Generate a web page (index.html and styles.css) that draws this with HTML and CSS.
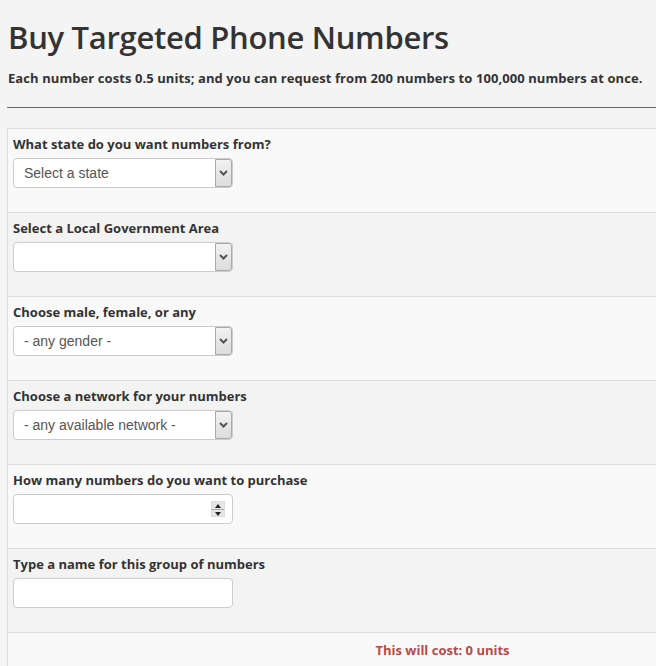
FILE: index.html
```html
<!DOCTYPE html>
<html>
<head>
<meta charset="utf-8">
<link rel="stylesheet" href="styles.css">
</head>
<body>
<div class="page">
  <h1 class="title">Buy Targeted Phone Numbers</h1>
  <p class="lead">Each number costs 0.5 units; and you can request from 200 numbers to 100,000 numbers at once.</p>
  <hr class="rule">
  <div class="form">
    <div class="row odd">
      <label class="label">What state do you want numbers from?</label>
      <div class="select"><span class="select-text">Select a state</span><span class="arrow"><svg width="9" height="6" viewBox="0 0 9 6"><path d="M1 1 L4.5 4.5 L8 1" fill="none" stroke="#555" stroke-width="2"/></svg></span></div>
    </div>
    <div class="row even">
      <label class="label">Select a Local Government Area</label>
      <div class="select"><span class="select-text"></span><span class="arrow"><svg width="9" height="6" viewBox="0 0 9 6"><path d="M1 1 L4.5 4.5 L8 1" fill="none" stroke="#555" stroke-width="2"/></svg></span></div>
    </div>
    <div class="row odd">
      <label class="label">Choose male, female, or any</label>
      <div class="select"><span class="select-text">- any gender -</span><span class="arrow"><svg width="9" height="6" viewBox="0 0 9 6"><path d="M1 1 L4.5 4.5 L8 1" fill="none" stroke="#555" stroke-width="2"/></svg></span></div>
    </div>
    <div class="row even">
      <label class="label">Choose a network for your numbers</label>
      <div class="select"><span class="select-text">- any available network -</span><span class="arrow"><svg width="9" height="6" viewBox="0 0 9 6"><path d="M1 1 L4.5 4.5 L8 1" fill="none" stroke="#555" stroke-width="2"/></svg></span></div>
    </div>
    <div class="row odd">
      <label class="label">How many numbers do you want to purchase</label>
      <div class="input"><span class="spinner"><span class="spin-up"></span><span class="spin-down"></span></span></div>
    </div>
    <div class="row even">
      <label class="label">Type a name for this group of numbers</label>
      <div class="input"></div>
    </div>
    <div class="row odd cost-row">
      <span class="cost">This will cost: 0 units</span>
    </div>
  </div>
</div>
</body>
</html>
```
FILE: styles.css
```css
html, body { margin: 0; padding: 0; overflow: hidden; }
body {
  background: #f4f4f4;
  font-family: "Open Sans", "DejaVu Sans", sans-serif;
  color: #333;
  width: 656px;
  height: 666px;
}
.page {
  width: 870px;
  padding-left: 7px;
}
.title {
  margin: 0;
  padding: 17px 0 0 1px;
  font-size: 31px;
  font-weight: 600;
  line-height: 40px;
  letter-spacing: -0.3px;
}
.lead {
  margin: 12px 0 0 1px;
  font-size: 13px;
  font-weight: 700;
  line-height: 18px;
  letter-spacing: 0.08px;
}
.rule {
  margin: 20px 0 0 0;
  border: 0;
  border-top: 1px solid #666;
  height: 0;
}
.form {
  margin-top: 20px;
  border-left: 1px solid #ddd;
  border-top: 1px solid #ddd;
}
.row {
  border-bottom: 1px solid #ddd;
  padding: 6px 5px 0 5px;
  box-sizing: border-box;
  height: 84px;
  display: flex;
  flex-direction: column;
  gap: 5px;
}
.odd { background: #f9f9f9; }
.even { background: #f3f3f3; }
.label {
  font-size: 13px;
  font-weight: 700;
  line-height: 18px;
  letter-spacing: 0;
  color: #333;
}
.select, .input {
  position: relative;
  width: 220px;
  height: 30px;
  box-sizing: border-box;
  border: 1px solid #ccc;
  border-radius: 4px;
  background: #fff;
  display: flex;
  align-items: center;
}
.select-text {
  padding-left: 10px;
  font-family: "Liberation Sans", Arial, sans-serif;
  font-size: 14px;
  color: #555;
}
.arrow {
  position: absolute;
  right: 0;
  top: 0;
  width: 17px;
  height: 28px;
  box-sizing: border-box;
  border: 1px solid #a9a9a9;
  border-radius: 0 3px 3px 0;
  background: linear-gradient(#f2f2f2, #dcdcdc);
  display: flex;
  align-items: center;
  justify-content: center;
}
.spinner {
  position: absolute;
  right: 7px;
  top: 6px;
  width: 14px;
  height: 16px;
  display: flex;
  flex-direction: column;
  background: #e6e6e6;
  border: 1px solid #ddd;
  box-sizing: border-box;
}
.spin-up, .spin-down {
  flex: 1;
  position: relative;
}
.spin-up { border-bottom: 1px solid #aaa; }
.spin-up::after, .spin-down::after {
  content: "";
  position: absolute;
  left: 3px;
  width: 0; height: 0;
  border-left: 3px solid transparent;
  border-right: 3px solid transparent;
}
.spin-up::after { top: 2px; border-bottom: 4px solid #222; }
.spin-down::after { top: 2px; border-top: 4px solid #222; }
.cost-row {
  align-items: center;
  padding-top: 8px;
}
.cost {
  font-size: 13px;
  font-weight: 700;
  color: #b94a48;
  letter-spacing: 0;
}
```
